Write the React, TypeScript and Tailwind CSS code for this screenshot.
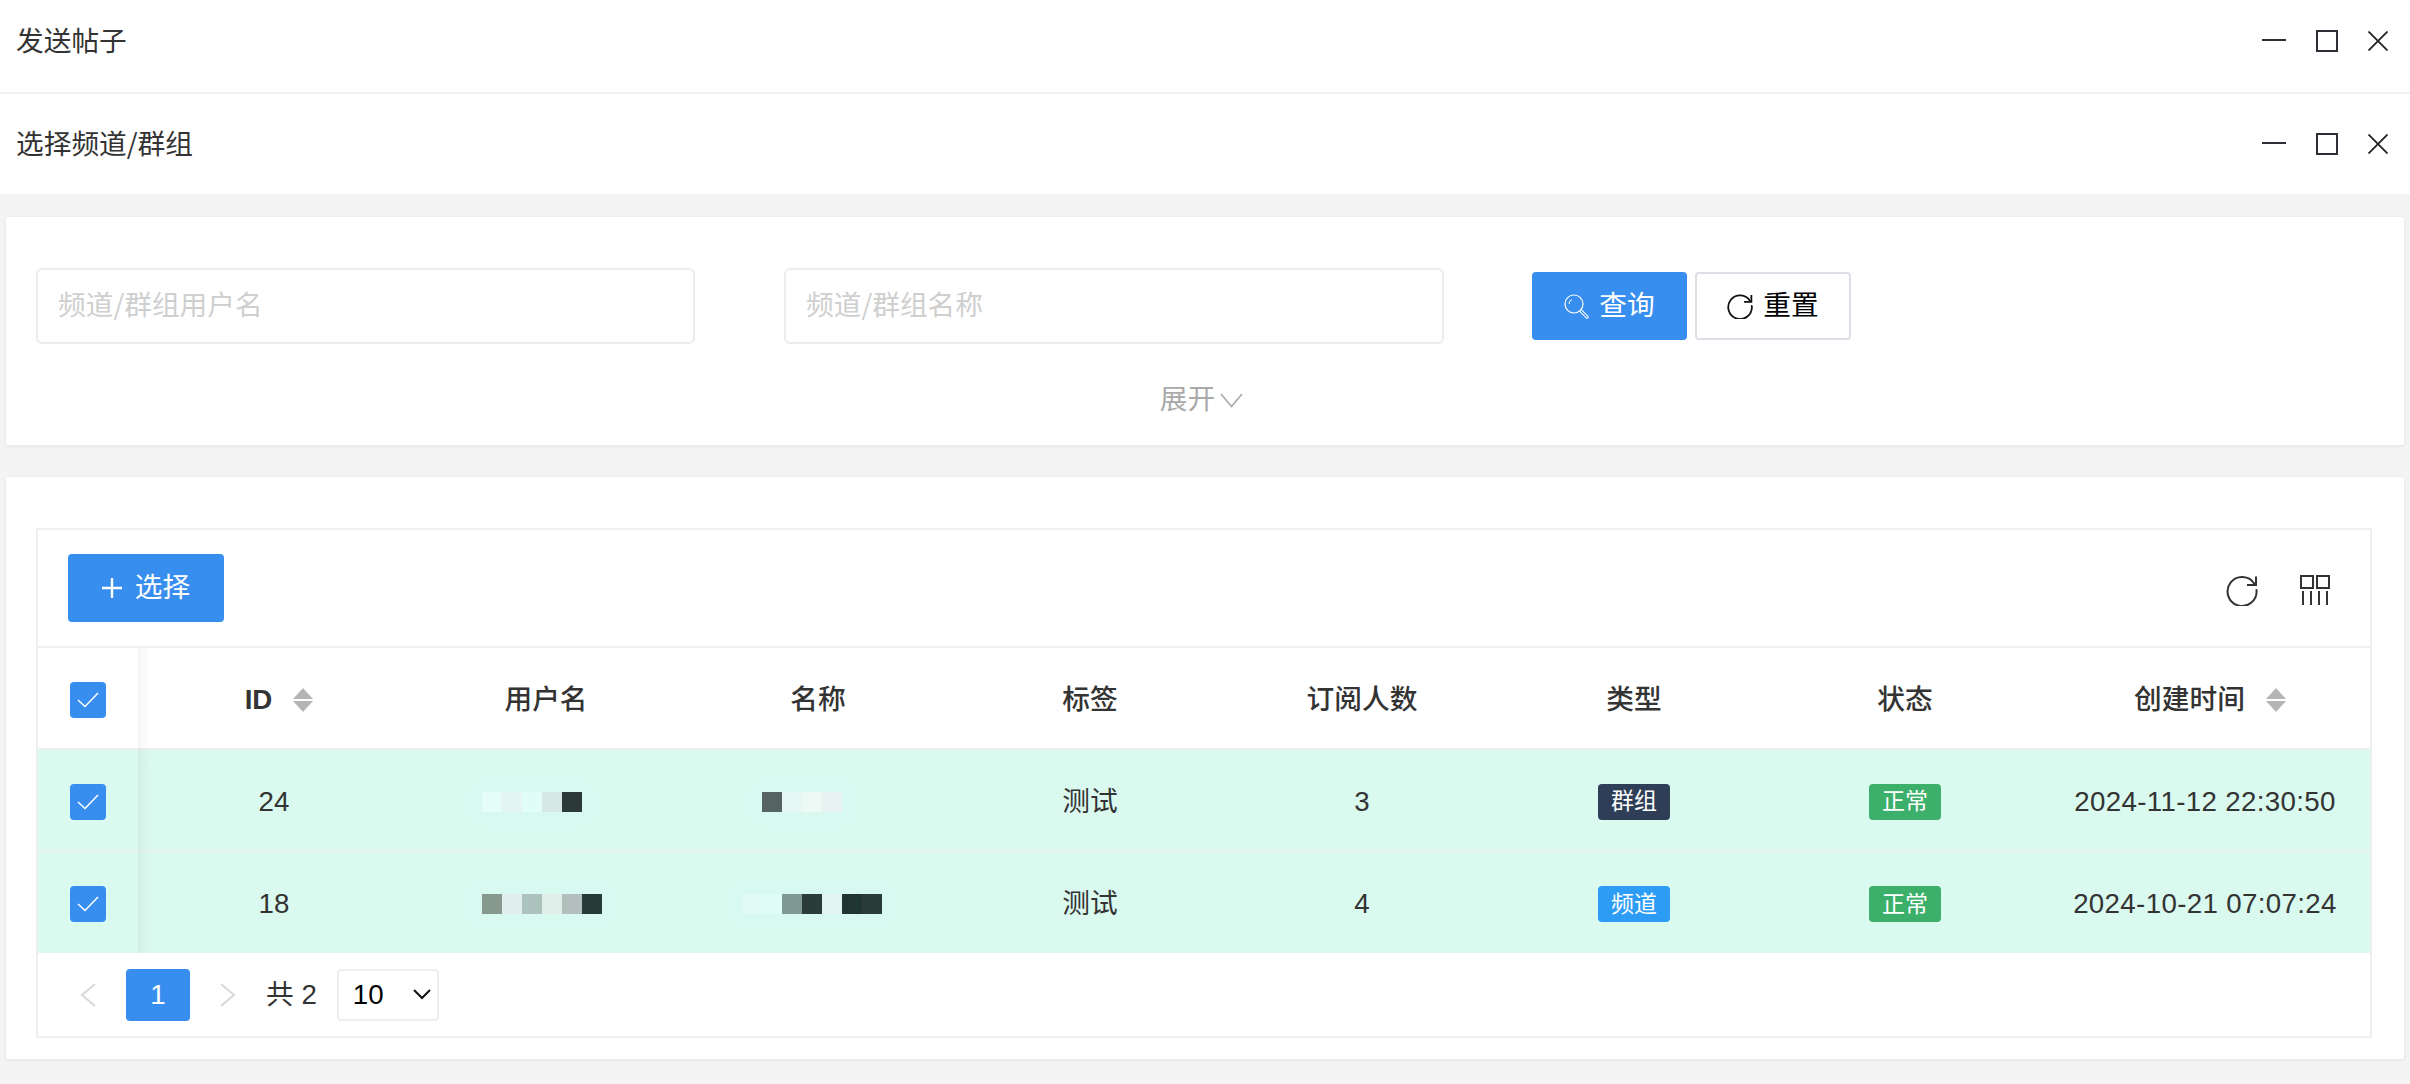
const tableCols = "grid grid-cols-[100px_repeat(6,272px)_270px_330px] pt-[3px]";

function WindowBar({ title, bordered }: { title: string; bordered?: boolean }) {
  return (
    <div
      className={
        bordered
          ? "flex h-[94px] items-center justify-between border-b-2 border-[#f1f1f1] bg-white pb-[10px] pl-4 pr-[22px]"
          : "flex h-[100px] items-center justify-between bg-white pl-4 pr-[22px]"
      }
    >
      <span className="pb-[2px] font-['Noto_Sans_CJK_SC',sans-serif] text-[27.7px] text-[#333]">{title}</span>
      <div className="flex items-center">
        <svg width="24" height="22" viewBox="0 0 24 22" className="mr-[30px]">
          <path d="M0 10h24" stroke="#2e2e38" strokeWidth="2" fill="none" />
        </svg>
        <svg width="22" height="22" viewBox="0 0 22 22" className="mr-[30px]">
          <rect x="1" y="1" width="20" height="20" stroke="#2e2e38" strokeWidth="2" fill="none" />
        </svg>
        <svg width="20" height="20" viewBox="0 0 20 20">
          <path d="M0.5 0.5l19 19M19.5 0.5l-19 19" stroke="#222" strokeWidth="1.8" fill="none" />
        </svg>
      </div>
    </div>
  );
}

function RefreshIcon({ size, color, width }: { size: number; color: string; width: number }) {
  return (
    <svg width={size} height={size} viewBox="0 0 32 32" fill="none">
      <path
        d="M28.5 10A14.5 14.5 0 1 0 30.5 16"
        stroke={color}
        strokeWidth={width}
        strokeLinecap="round"
      />
      <path d="M30 2.5V11H21" stroke={color} strokeWidth={width} strokeLinejoin="miter" />
    </svg>
  );
}

function SortIcon() {
  return (
    <svg width="20" height="24" viewBox="0 0 20 24">
      <path d="M10 0L20 11H0z" fill="#b5b5b5" />
      <path d="M0 13H20L10 24z" fill="#b5b5b5" />
    </svg>
  );
}

function Check() {
  return (
    <span className="flex h-9 w-9 items-center justify-center rounded-[4px] bg-[#388eee]">
      <svg width="22" height="16" viewBox="0 0 22 16" fill="none">
        <path d="M1 8l7 6.5L21 1" stroke="#fff" strokeWidth="1.5" />
      </svg>
    </span>
  );
}

function Mosaic({ cells, className }: { cells: string[]; className: string }) {
  return (
    <div className={className}>
      <div className="flex rounded-[30px] bg-[#d8f9ef] px-5 py-5">{cells.map((c, i) => <Cell key={i} c={c} />)}</div>
    </div>
  );
}

function Cell({ c }: { c: string }) {
  return <span className={"h-5 w-5 " + c} />;
}

function Tag({ text, color }: { text: string; color: string }) {
  return (
    <span className={"flex h-9 w-[72px] items-center justify-center rounded-[4px] text-[23px] text-white " + color}>
      {text}
    </span>
  );
}

function HeadCell({ text, sort, latin, className }: { text: string; sort?: boolean; latin?: boolean; className?: string }) {
  return (
    <div className={"flex items-center justify-center text-[27.7px] text-[#333] " + (className ?? "")}>
      <span className={latin ? "font-bold" : "font-medium"}>{text}</span>
      {sort && <span className="ml-[21px] flex"><SortIcon /></span>}
    </div>
  );
}

function Row({
  id,
  user,
  name,
  count,
  type,
  time,
  className,
}: {
  id: string;
  user: React.ReactNode;
  name: React.ReactNode;
  count: string;
  type: React.ReactNode;
  time: string;
  className: string;
}) {
  return (
    <div className={tableCols + " bg-[#daf9ef] text-[27.7px] text-[#333] " + className}>
      <div className="flex items-center justify-center"><Check /></div>
      <div className="flex items-center justify-center">{id}</div>
      {user}
      {name}
      <div className="flex items-center justify-center">测试</div>
      <div className="flex items-center justify-center">{count}</div>
      <div className="flex items-center justify-center">{type}</div>
      <div className="flex items-center justify-center"><Tag text="正常" color="bg-[#3cb06a]" /></div>
      <div className="flex items-center justify-center tracking-[0.35px]">{time}</div>
    </div>
  );
}

export default function App() {
  return (
    <div className="min-h-[1084px] w-full overflow-hidden bg-[#f4f4f4] font-['Liberation_Sans','Noto_Sans_CJK_SC',sans-serif]">
      <WindowBar title="发送帖子" bordered />
      <WindowBar title="选择频道/群组" />

      <div className="mx-[6px] mt-[23px] h-[228px] rounded-[2px] bg-white pt-[51px] shadow-[0_1px_4px_rgba(0,0,0,0.08)]">
        <div className="flex items-center pl-[30px]">
          <input
            placeholder="频道/群组用户名"
            className="h-[76px] w-[659px] rounded-[6px] border-2 border-[#ececec] px-5 pb-[6px] font-['Noto_Sans_CJK_SC',sans-serif] text-[27.7px] outline-none placeholder:text-[#cfcfcf]"
          />
          <input
            placeholder="频道/群组名称"
            className="ml-[89px] h-[76px] w-[660px] rounded-[6px] border-2 border-[#ececec] px-5 pb-[6px] font-['Noto_Sans_CJK_SC',sans-serif] text-[27.7px] outline-none placeholder:text-[#cfcfcf]"
          />
          <button className="ml-[88px] flex h-[68px] w-[155px] items-center justify-center rounded-[4px] bg-[#388eee] text-[27.7px] text-white">
            <svg width="25" height="25" viewBox="0 0 25 25" fill="none" className="mr-[10px]">
              <circle cx="10" cy="10" r="9" stroke="#fff" strokeWidth="1.2" />
              <path d="M5 10a5 5 0 0 1 3-4.5" stroke="#fff" strokeWidth="1" />
              <path d="M17 17l6 6" stroke="#fff" strokeWidth="3.2" strokeLinecap="round" />
              <path d="M17 17l6 6" stroke="#388eee" strokeWidth="1.2" strokeLinecap="round" />
            </svg>
            查询
          </button>
          <button className="ml-2 flex h-[68px] w-[156px] items-center justify-center rounded-[4px] border-2 border-[#dcdfe6] bg-white text-[27.7px] text-black">
            <span className="mr-[10px] flex"><RefreshIcon size={26} color="#111" width={2.2} /></span>
            重置
          </button>
        </div>
        <div className="mt-[38px] flex h-9 items-center justify-center pr-[7px] text-[27.7px] text-[#a9a9a9]">
          <span>展开</span>
          <svg width="23" height="15" viewBox="0 0 23 15" fill="none" className="ml-[5px]">
            <path d="M1 1l10.5 12.5L22 1" stroke="#a9a9a9" strokeWidth="1.6" />
          </svg>
        </div>
      </div>

      <div className="mx-[6px] mt-[32px] h-[582px] rounded-[2px] bg-white pl-[30px] pr-[32px] pt-[51px] shadow-[0_1px_4px_rgba(0,0,0,0.08)]">
        <div className="h-[510px] border-2 border-[#efefef] bg-white">
          <div className="flex h-[118px] items-center justify-between border-b-2 border-[#efefef] pl-[30px] pr-[40px]">
            <button className="flex h-[68px] w-[156px] items-center justify-center rounded-[4px] bg-[#388eee] text-[27.7px] text-white">
              <svg width="20" height="20" viewBox="0 0 20 20" className="mr-[13px]">
                <path d="M10 0v20M0 10h20" stroke="#fff" strokeWidth="2.4" />
              </svg>
              选择
            </button>
            <div className="flex items-center gap-[42px] pt-1">
              <RefreshIcon size={32} color="#333" width={2} />
              <svg width="30" height="30" viewBox="0 0 30 30" fill="none" stroke="#333" strokeWidth="2">
                <rect x="1" y="1" width="12" height="12" />
                <rect x="17" y="1" width="12" height="12" />
                <path d="M3 16v14M11 16v14M19 16v14M27 16v14" />
              </svg>
            </div>
          </div>

          <div className="relative">
            <div className={tableCols + " h-[102px] border-b-2 border-[#efefef] bg-white"}>
              <div className="flex items-center justify-center"><Check /></div>
              <HeadCell text="ID" sort latin className="pl-[10px]" />
              <HeadCell text="用户名" />
              <HeadCell text="名称" />
              <HeadCell text="标签" />
              <HeadCell text="订阅人数" />
              <HeadCell text="类型" />
              <HeadCell text="状态" />
              <HeadCell text="创建时间" sort className="pl-[10px]" />
            </div>
            <Row
              id="24"
              count="3"
              time="2024-11-12 22:30:50"
              className="h-[102px] border-b-2 border-[#e6f5ef]"
              type={<Tag text="群组" color="bg-[#2d3e56]" />}
              user={
                <Mosaic
                  className="flex items-center pl-[52px]"
                  cells={["bg-[#e4fdf8]", "bg-[#e4f5f1]", "bg-[#e0fdf8]", "bg-[#d5e8e3]", "bg-[#2c3a37]"]}
                />
              }
              name={
                <Mosaic
                  className="flex items-center pl-[60px]"
                  cells={["bg-[#556361]", "bg-[#e6f7f3]", "bg-[#ecf9f5]", "bg-[#e8f3f1]"]}
                />
              }
            />
            <Row
              id="18"
              count="4"
              time="2024-10-21 07:07:24"
              className="h-[101px]"
              type={<Tag text="频道" color="bg-[#2d9cf5]" />}
              user={
                <Mosaic
                  className="flex items-center pl-[52px]"
                  cells={["bg-[#87988f]", "bg-[#e0efec]", "bg-[#acc3bd]", "bg-[#e0eeea]", "bg-[#b2bfbc]", "bg-[#243c35]"]}
                />
              }
              name={
                <Mosaic
                  className="flex items-center pl-[40px]"
                  cells={["bg-[#e0fbf5]", "bg-[#e0fcf7]", "bg-[#7f9a92]", "bg-[#2b3b37]", "bg-[#e2f4f0]", "bg-[#1f3530]", "bg-[#2a3a36]"]}
                />
              }
            />
            <div className="absolute bottom-0 left-[100px] top-0 w-[12px] bg-gradient-to-r from-black/[0.04] to-transparent" />
          </div>

          <div className="flex h-[83px] items-center pl-[42px] text-[27.7px] text-[#333]">
            <svg width="16" height="24" viewBox="0 0 16 24" fill="none">
              <path d="M15 1L2 12l13 11" stroke="#d8d8d8" strokeWidth="2" />
            </svg>
            <span className="ml-[30px] flex h-[52px] w-16 items-center justify-center rounded-[4px] bg-[#388eee] text-white">1</span>
            <svg width="16" height="24" viewBox="0 0 16 24" fill="none" className="ml-[30px]">
              <path d="M1 1l13 11L1 23" stroke="#d8d8d8" strokeWidth="2" />
            </svg>
            <span className="ml-[30px]">共 2</span>
            <div className="ml-[20px] flex h-[52px] w-[102px] items-center justify-between rounded-[4px] border-2 border-[#eeeeee] pl-[14px] pr-[6px] text-black">
              <span>10</span>
              <svg width="18" height="11" viewBox="0 0 18 11" fill="none">
                <path d="M1 1l8 8 8-8" stroke="#111" strokeWidth="2" />
              </svg>
            </div>
          </div>
        </div>
      </div>
    </div>
  );
}
